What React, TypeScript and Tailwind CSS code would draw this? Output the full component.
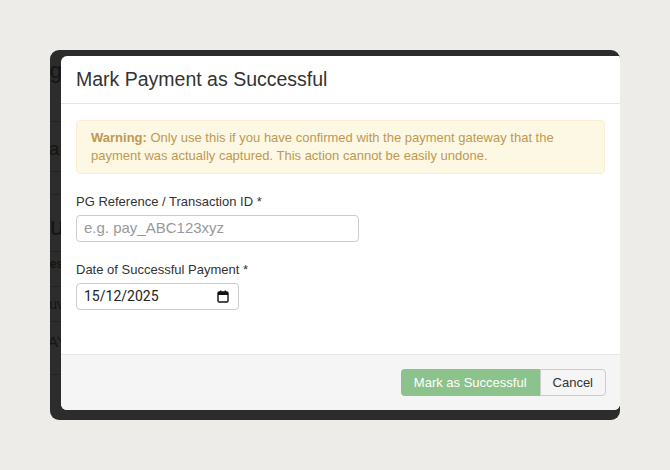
import React from "react";

function CalendarIcon() {
  return (
    <svg width="12" height="13" viewBox="0 0 12 13" className="block">
      <rect x="1" y="2" width="10" height="10" rx="1.2" fill="none" stroke="#111" strokeWidth="1.4" />
      <rect x="1" y="2" width="10" height="3" fill="#111" />
      <rect x="3" y="0.5" width="1.4" height="2.5" fill="#111" />
      <rect x="7.6" y="0.5" width="1.4" height="2.5" fill="#111" />
    </svg>
  );
}

export default function App() {
  const font = { fontFamily: '"Liberation Sans", Arial, Helvetica, sans-serif' };
  return (
    <div className="w-[670px] h-[470px] bg-[#eeece8] pt-[50px] pl-[50px]" style={font}>
      <div className="w-[570px] h-[370px] bg-[#2c2c2c] rounded-[9px] overflow-hidden flex">
        {/* background page peeking through overlay */}
        <div className="w-[11px] shrink-0 overflow-hidden flex flex-col text-[#141414]">
          <div className="h-[72px] border-b border-[#232323] relative">
            <span className="absolute right-[-1px] top-[4px] text-[22px] whitespace-nowrap">Billing</span>
          </div>
          <div className="h-[50px] border-b border-[#232323] relative">
            <span className="absolute right-[-9px] top-[13px] text-[19px] whitespace-nowrap">Plan</span>
          </div>
          <div className="h-[23px] border-b border-[#232323]"></div>
          <div className="h-[57px] border-b border-[#232323] relative">
            <span className="absolute right-[-3px] top-[13px] text-[25px] whitespace-nowrap">Resu</span>
          </div>
          <div className="h-[35px] border-b border-[#232323] relative">
            <span className="absolute right-[-2px] top-[3px] text-[12px] font-bold whitespace-nowrap">Ses</span>
          </div>
          <div className="h-[35px] border-b border-[#232323] relative">
            <span className="absolute right-[-3px] top-[7px] text-[14px] whitespace-nowrap">Nuv</span>
          </div>
          <div className="h-[53px] border-b border-[#232323] relative">
            <span className="absolute right-[-6px] top-[9px] text-[15px] whitespace-nowrap">PAY</span>
          </div>
          <div className="flex-1"></div>
        </div>

        {/* modal */}
        <div className="flex-1 mt-[6px] h-[354px] bg-white rounded-tl-[6px] rounded-bl-[6px] rounded-br-[6px] flex flex-col overflow-hidden">
          <div className="h-[48px] shrink-0 border-b border-[#e5e5e5] px-[15px] flex items-center">
            <h4 className="text-[19.5px] text-[#333] leading-none pt-[1px]">Mark Payment as Successful</h4>
          </div>
          <div className="flex-1 px-[15px] pt-[16px]">
            <div className="bg-[#fcf8e3] border border-[#fbeed5] rounded-[4px] px-[14px] py-[8px] text-[13px] leading-[18px] text-[#c09853]">
              <b>Warning:</b> Only use this if you have confirmed with the payment gateway that the payment was actually captured. This action cannot be easily undone.
            </div>
            <div className="mt-[19px] text-[13px] leading-[18px] text-[#333]">PG Reference / Transaction ID *</div>
            <div className="mt-[4px] w-[283px] h-[27px] border border-[#ccc] rounded-[4px] flex items-center px-[7px] text-[15px] text-[#999]">
              e.g. pay_ABC123xyz
            </div>
            <div className="mt-[19px] text-[13px] leading-[18px] text-[#333]">Date of Successful Payment *</div>
            <div className="mt-[4px] w-[163px] h-[27px] border border-[#ccc] rounded-[4px] flex items-center justify-between pl-[7px] pr-[9px] text-[14px] text-[#222]" style={{ fontFamily: 'Roboto, "Liberation Sans", sans-serif' }}>
              <span>15/12/2025</span>
              <CalendarIcon />
            </div>
          </div>
          <div className="h-[56px] shrink-0 bg-[#f5f5f5] border-t border-[#e5e5e5] flex items-center justify-end pr-[14px]">
            <div className="flex">
              <div className="h-[27px] px-[13px] flex items-center bg-[#8cc28c] text-white text-[13px] rounded-l-[4px]">Mark as Successful</div>
              <div className="h-[27px] px-[12px] flex items-center bg-[#f5f5f5] text-[#333] text-[13px] border border-[#ccc] rounded-r-[4px]">Cancel</div>
            </div>
          </div>
        </div>
      </div>
    </div>
  );
}
